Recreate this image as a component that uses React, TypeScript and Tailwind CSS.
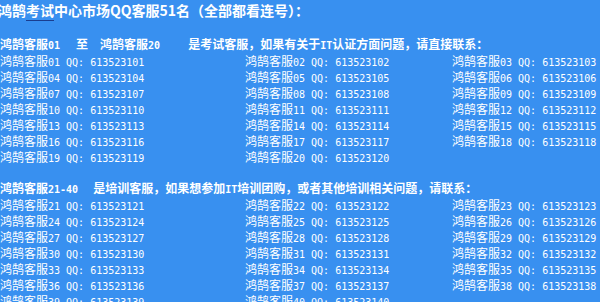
const cn = "font-['Noto_Sans_CJK_SC',sans-serif]";
const mono = "font-['DejaVu_Sans_Mono','Noto_Sans_CJK_SC',monospace] text-[10px]";

const pad = (n: number) => (n < 10 ? "0" + n : "" + n);

const Row = ({ n }: { n: number }) => (
    <div className="h-[16px] leading-[16px] whitespace-pre">
        <span className={`${cn} text-[12px]`}>鸿鹄客服</span>
        <span className={mono}>{pad(n)} QQ: {613523100 + n}</span>
    </div>
);

const Block = ({ from, to }: { from: number; to: number }) => {
    const nums: number[] = [];
    for (let i = from; i <= to; i++) nums.push(i);
    return (
        <div className="grid grid-cols-[245px_207px_1fr]">
            {nums.map((n) => (
                <Row key={n} n={n} />
            ))}
        </div>
    );
};

const App = () => {
    return (
        <div className="w-[600px] h-[302px] overflow-hidden bg-[#3890f0] text-white">
            <div className="h-[36px]">
                <div className={`${cn} -ml-[2px] h-[20px] leading-[20px] text-[14px] font-bold whitespace-pre`}>
                    鸿鹄<span className="border-b border-[#1a3d8f]">考试</span>中心市场QQ客服51名（全部都看连号）：
                </div>
            </div>

            <div className={`${cn} h-[16px] leading-[16px] text-[12px] font-bold whitespace-pre flex`}>
                <span>鸿鹄客服<span className={mono}>01</span></span>
                <span className="ml-[16px]">至</span>
                <span className="ml-[12px]">鸿鹄客服<span className={mono}>20</span></span>
                <span className="ml-[28px]">是考试客服，如果有关于<span className={mono}>IT</span>认证方面问题，请直接联系：</span>
            </div>
            <Block from={1} to={20} />

            <div className="h-[16px]" />

            <div className={`${cn} h-[16px] leading-[16px] text-[12px] font-bold whitespace-pre flex`}>
                <span>鸿鹄客服<span className={mono}>21-40</span></span>
                <span className="ml-[15px]">是培训客服，如果想参加<span className={mono}>IT</span>培训团购，或者其他培训相关问题，请联系：</span>
            </div>
            <Block from={21} to={40} />
        </div>
    );
};

export default App;
